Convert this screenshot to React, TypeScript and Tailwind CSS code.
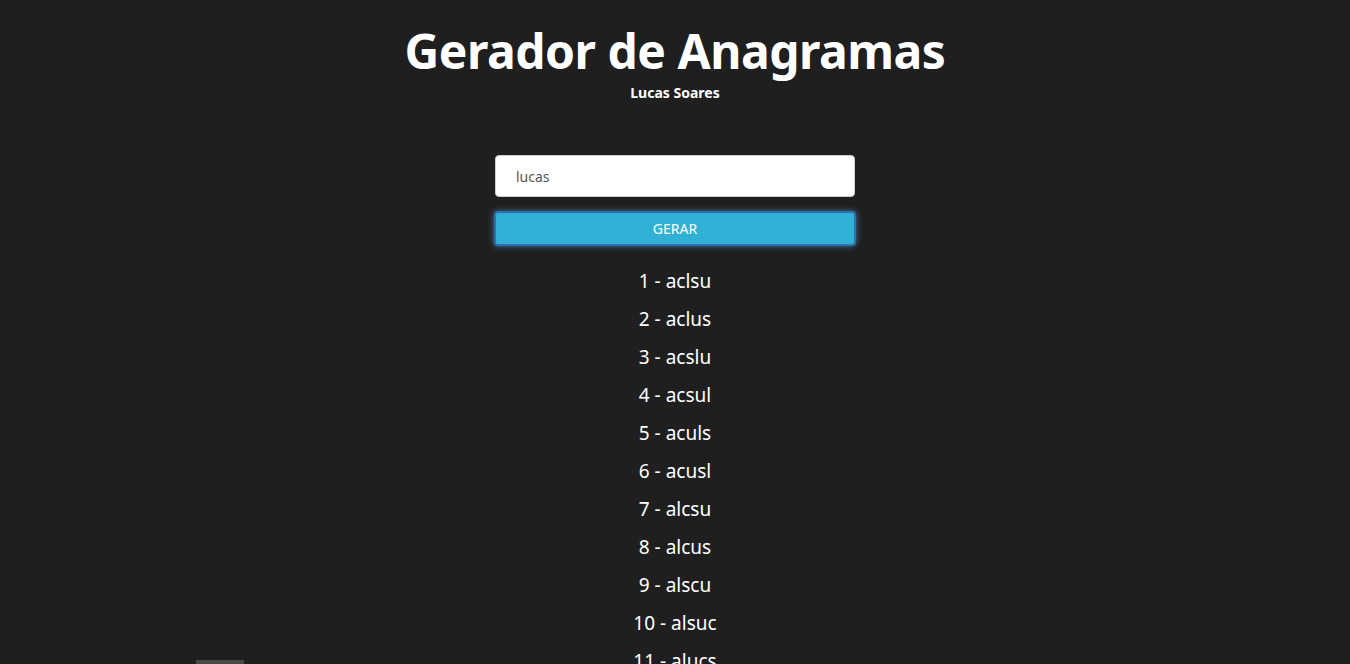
import { useState } from "react";

const LETTERS = "lucas";

function permutations(word: string): string[] {
  const sorted = word.split("").sort();
  const out: string[] = [];
  const used = sorted.map(() => false);
  const walk = (acc: string) => {
    if (acc.length === sorted.length) {
      out.push(acc);
      return;
    }
    for (let i = 0; i < sorted.length; i++) {
      if (used[i]) continue;
      if (i > 0 && sorted[i] === sorted[i - 1] && !used[i - 1]) continue;
      used[i] = true;
      walk(acc + sorted[i]);
      used[i] = false;
    }
  };
  walk("");
  return out;
}

export default function App() {
  const [word, setWord] = useState(LETTERS);
  const [results, setResults] = useState<string[]>(permutations(LETTERS));

  return (
    <div
      className="min-h-screen bg-[#1f1f1f] text-white"
      style={{ fontFamily: '"Noto Sans", "Open Sans", sans-serif' }}
    >
      <div className="flex flex-col items-center pt-[20px]">
        <h1 className="text-[48px] font-bold leading-[62px] tracking-[-0.5px]">
          Gerador de Anagramas
        </h1>
        <p className="mt-[1px] text-[14px] font-bold leading-[20px]">Lucas Soares</p>

        <div className="mt-[52px] flex w-[362px] flex-col gap-[14px]">
          <input
            value={word}
            onChange={(e) => setWord(e.target.value)}
            className="mx-[1px] h-[42px] rounded-[4px] border border-[#cccccc] bg-white px-[20px] text-[14px] text-[#555555] outline-none"
          />
          <button
            onClick={() => setResults(permutations(word))}
            className="h-[35px] rounded-[4px] border-2 border-[#2d6fb0] bg-[#31b0d5] text-[14px] text-white shadow-[0_0_6px_rgba(102,175,233,0.6)]"
          >
            GERAR
          </button>
        </div>

        <ul className="mt-[16px] flex flex-col items-center">
          {results.map((r, i) => (
            <li key={r} className="text-[19px] leading-[38px]">
              {i + 1} - {r}
            </li>
          ))}
        </ul>
      </div>
      <div className="fixed bottom-0 left-[196px] h-[4px] w-[48px] bg-[#4a4a4a]" />
    </div>
  );
}
